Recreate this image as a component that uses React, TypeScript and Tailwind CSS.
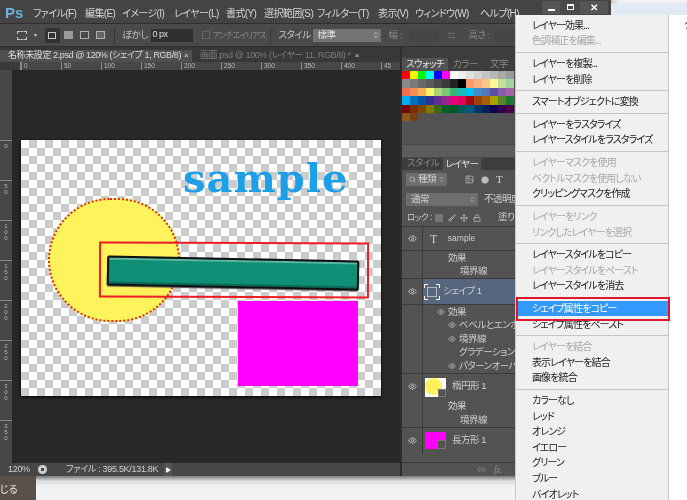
import { Eye, Link2, Lock, Move, Brush, ArrowLeftRight, Search, Image, Circle, ChevronsUpDown, Play } from "lucide-react";

const menuBar = [
  { label: "ファイル(F)", w: "w-[52px]" },
  { label: "編集(E)", w: "w-[37px]" },
  { label: "イメージ(I)", w: "w-[52px]" },
  { label: "レイヤー(L)", w: "w-[52px]" },
  { label: "書式(Y)", w: "w-[38px]" },
  { label: "選択範囲(S)", w: "w-[53px]" },
  { label: "フィルター(T)", w: "w-[61px]" },
  { label: "表示(V)", w: "w-[37px]" },
  { label: "ウィンドウ(W)", w: "w-[65px]" },
  { label: "ヘルプ(H)", w: "w-[62px]" },
];

const swatches = [
  ["#ff0000", "#ffff00", "#00ff00", "#00ffff", "#0000ff", "#ff00ff", "#ffffff", "#f0f0f0", "#e0e0e0", "#d2d2d2", "#c4c4c4", "#b6b6b6", "#a8a8a8", "#9a9a9a"],
  ["#8a8a8a", "#7a7a7a", "#6a6a6a", "#5a5a5a", "#4a4a4a", "#3a3a3a", "#222222", "#000000", "#f79a6c", "#fbb07e", "#fdc78d", "#fff799", "#c4df9b", "#a3d39c"],
  ["#f26c4f", "#f68e55", "#fbaf5c", "#fff467", "#acd372", "#7cc576", "#3bb878", "#1abbb4", "#00bff3", "#438cca", "#5574b9", "#5c50a2", "#8560a8", "#a763a8"],
  ["#00aeef", "#0072bc", "#0054a6", "#2e3192", "#662d91", "#92278f", "#e6007e", "#e6005f", "#9e0b0f", "#a0410d", "#a36209", "#aba000", "#598527", "#1a7b30"],
  ["#790000", "#7b2e00", "#7d4900", "#827b00", "#406618", "#005e20", "#005826", "#005952", "#005b7f", "#003663", "#002157", "#0d004c", "#32004b", "#4b0049"],
  ["#8c5a1f", "#7a3f10"],
];

const contextMenu: (string | { t: string; off?: boolean; on?: boolean } | null)[] = [
  "レイヤー効果...",
  { t: "色調補正を編集...", off: true },
  null,
  "レイヤーを複製...",
  "レイヤーを削除",
  null,
  "スマートオブジェクトに変換",
  null,
  "レイヤーをラスタライズ",
  "レイヤースタイルをラスタライズ",
  null,
  { t: "レイヤーマスクを使用", off: true },
  { t: "ベクトルマスクを使用しない", off: true },
  "クリッピングマスクを作成",
  null,
  { t: "レイヤーをリンク", off: true },
  { t: "リンクしたレイヤーを選択", off: true },
  null,
  "レイヤースタイルをコピー",
  { t: "レイヤースタイルをペースト", off: true },
  "レイヤースタイルを消去",
  null,
  { t: "シェイプ属性をコピー", on: true },
  "シェイプ属性をペースト",
  null,
  { t: "レイヤーを結合", off: true },
  "表示レイヤーを結合",
  "画像を統合",
  null,
  "カラーなし",
  "レッド",
  "オレンジ",
  "イエロー",
  "グリーン",
  "ブルー",
  "バイオレット",
];

function SubRow({ label, pl, eye }: { label: string; pl: string; eye?: boolean }) {
  return (
    <div className="flex h-[13.5px]">
      <div className="w-[21px] shrink-0 border-r border-[#3a3a3a]" />
      <div className={`flex w-[92px] shrink-0 items-center overflow-hidden whitespace-nowrap text-[9.5px] text-[#cfcfcf] ${pl}`}>
        {eye && <Eye size={8} className="mr-[3px] shrink-0 text-[#bdbdbd]" />}
        {label}
      </div>
    </div>
  );
}

export default function App() {
  return (
    <div className="relative h-[500px] w-[687px] overflow-hidden bg-[#f3f3f3] font-['Liberation_Sans','Noto_Sans_CJK_JP',sans-serif] blur-[0.35px] [font-feature-settings:'palt']">
      <div className="flex h-[476px]">
        {/* photoshop window */}
        <div className="flex w-[611px] shrink-0 flex-col bg-[#444444] shadow-[2px_2px_8px_rgba(0,0,0,0.6)]">
          <div className="flex h-[23px] shrink-0 items-center pl-[5px] pt-[3px]">
            <span className="w-[28px] shrink-0 text-[15px] font-bold text-[#6fb1e0]">Ps</span>
            <div className="flex shrink-0 text-[10px] tracking-[-0.6px] text-[#d4d4d4]">
              {menuBar.map((m) => (
                <span key={m.label} className={`shrink-0 whitespace-nowrap ${m.w}`}>{m.label}</span>
              ))}
            </div>
            <div className="flex -translate-y-[6px] text-white">
              <div className="flex h-[13px] w-[18px] items-end justify-center bg-[#555555] pb-[3px]"><div className="h-[2px] w-[7px] bg-white" /></div>
              <div className="flex h-[13px] w-[20px] items-center justify-center bg-[#4a4a4a]"><div className="h-[6px] w-[7px] border border-t-2 border-white" /></div>
              <div className="flex h-[13px] w-[28px] items-center justify-center bg-[#555555] text-[10px] font-bold">✕</div>
            </div>
          </div>

          <div className="flex h-[24px] shrink-0 items-center border-y border-[#2e2e2e] bg-[#4a4a4a] pl-[17px] text-[9.5px] tracking-[-0.5px] text-[#c8c8c8]">
            <div className="h-[9px] w-[10px] border border-dashed border-[#c8c8c8]" />
            <span className="ml-[7px] text-[6px]">▾</span>
            <div className="ml-[8px] flex h-[15px] w-[15px] items-center justify-center bg-[#333333]">
              <div className="h-[7px] w-[8px] border border-[#c8c8c8]" />
            </div>
            <div className="ml-[4px] h-[8px] w-[9px] bg-[#9a9a9a]" />
            <div className="ml-[7px] h-[8px] w-[9px] border border-[#b0b0b0]" />
            <div className="ml-[7px] h-[8px] w-[9px] border border-[#b0b0b0] bg-[#666666]" />
            <div className="ml-[9px] h-[15px] w-px bg-[#383838]" />
            <span className="ml-[8px] w-[28px] whitespace-nowrap">ぼかし :</span>
            <div className="flex h-[13px] w-[42px] items-center bg-[#303030] pl-[2px] text-[9px] text-[#dddddd]">0 px</div>
            <div className="ml-[9px] h-[8px] w-[8px] border border-[#666666]" />
            <span className="ml-[3px] w-[52px] whitespace-nowrap text-[8.5px] tracking-[-1px] text-[#808080]">アンチエイリアス</span>
            <div className="ml-[5px] h-[15px] w-px bg-[#383838]" />
            <span className="ml-[8px] w-[34px] whitespace-nowrap">スタイル :</span>
            <div className="flex h-[13px] w-[68px] items-center justify-between bg-[#737373] pl-[5px] pr-[1px] text-[#e0e0e0]">
              標準
              <ChevronsUpDown size={8} />
            </div>
            <span className="ml-[8px] w-[20px] text-[#888888]">幅 :</span>
            <div className="h-[13px] w-[30px] bg-[#454545]" />
            <ArrowLeftRight size={9} className="ml-[8px] text-[#777777]" />
            <span className="ml-[13px] w-[25px] whitespace-nowrap text-[#888888]">高さ :</span>
            <div className="h-[13px] w-[30px] bg-[#454545]" />
          </div>

          <div className="flex min-h-0 flex-1">
            {/* document column */}
            <div className="flex w-[400px] shrink-0 flex-col bg-[#282828]">
              <div className="flex h-[15px] shrink-0 items-stretch bg-[#383838] pt-[3px]">
                <div className="flex w-[192px] items-center bg-[#505050] pl-[8px] text-[9px] tracking-[-0.4px] text-[#dcdcdc]">
                  <span className="w-[176px] whitespace-nowrap">名称未設定 2.psd @ 120% (シェイプ 1, RGB/8)</span>
                  <span className="text-[8px]">×</span>
                </div>
                <div className="flex items-center pl-[8px] text-[9px] tracking-[-0.4px] text-[#7d7d7d]">
                  <span className="whitespace-nowrap">画面.psd @ 100% (レイヤー 11, RGB/8) *</span>
                  <span className="ml-[4px] text-[8px] text-[#cccccc]">×</span>
                </div>
              </div>
              <div className="flex h-[8px] shrink-0 bg-[#474747] text-[6.5px] leading-[8px] text-[#bbbbbb]">
                <div className="w-[21px] shrink-0 border-r border-[#8a8a8a] bg-[#3a3a3a]" />
                {["0", "50", "100", "150", "200", "250", "300", "350", "400", "45"].map((n) => (
                  <div key={n} className="w-[40px] shrink-0 border-l border-[#8a8a8a] pl-[2px]">{n}</div>
                ))}
              </div>
              <div className="flex min-h-0 flex-1">
                <div className="flex w-[12px] shrink-0 flex-col overflow-hidden bg-[#474747] pt-[70px] text-center text-[6px] leading-[6px] text-[#bbbbbb]">
                  {["0", "50", "100", "150", "200", "250", "300", "350"].map((n) => (
                    <div key={n} className="h-[40px] shrink-0 border-t border-[#8a8a8a] pt-[2px]">
                      {n.split("").map((d, i) => <div key={i}>{d}</div>)}
                    </div>
                  ))}
                </div>
                <div className="relative flex-1">
                  {/* canvas */}
                  <div className="ml-[9px] mt-[70px] h-[256px] w-[360px] bg-white bg-[conic-gradient(#cccccc_25%,#ffffff_0_50%,#cccccc_0_75%,#ffffff_0)] bg-[length:16px_16px] shadow-[0_1px_3px_#000]" />
                  <div className="absolute left-[36px] top-[128px] h-[124px] w-[132px] rounded-full border-2 border-dotted border-[#d8281f] bg-[#fff35c]" />
                  <div className="absolute left-[226px] top-[231px] h-[85px] w-[120px] bg-[#ff00ff]" />
                  <div className="absolute left-[171px] top-[84px] whitespace-nowrap font-['DejaVu_Serif',serif] text-[40px] font-bold leading-[48px] tracking-[1px] text-[#1c9fe6]">sample</div>
                  <div className="absolute left-[95px] top-[188px] h-[30px] w-[252px] rotate-[1.1deg] rounded-[2px] border-2 border-[#111111] bg-[#0f8f76] shadow-[inset_0_2px_0_#5db5a2,inset_0_-2px_0_#0a6a58,0_1px_1px_#555555]" />
                  <div className="absolute left-[87px] top-[172px] h-[56px] w-[270px] rotate-[0.2deg] border-2 border-[#ee1c25]" />
                </div>
              </div>
              <div className="flex h-[13px] shrink-0 items-center bg-[#474747] text-[9px] tracking-[-0.3px] text-[#d0d0d0]">
                <span className="ml-[8px] w-[30px]">120%</span>
                <div className="flex h-[9px] w-[9px] items-center justify-center rounded-full bg-[#d0d0d0]"><div className="h-[3px] w-[3px] bg-[#474747]" /></div>
                <span className="ml-[19px] w-[98px] whitespace-nowrap">ファイル : 395.5K/131.8K</span>
                <div className="flex h-full w-[8px] items-center justify-center bg-[#545454]">
                  <Play size={6} className="fill-white text-white" />
                </div>
              </div>
            </div>

            {/* panels */}
            <div className="flex flex-1 flex-col border-l-2 border-[#2e2e2e] bg-[#535353] text-[9.5px] tracking-[-0.5px] text-[#cfcfcf]">
              <div className="flex h-[24px] shrink-0 items-end bg-[#3d3d3d] pt-[10px]">
                <div className="flex h-[13px] w-[46px] items-center justify-center bg-[#535353] text-[#e6e6e6]">スウォッチ</div>
                <span className="ml-[5px] text-[#8a8a8a]">カラー</span>
                <span className="ml-[12px] text-[#8a8a8a]">文字</span>
              </div>
              <div className="flex h-[73px] shrink-0 flex-col">
                {swatches.map((row, i) => (
                  <div key={i} className="flex h-[8.4px]">
                    {row.map((c, j) => (
                      <div key={j} className="h-full w-[8px]" style={{ background: c }} />
                    ))}
                  </div>
                ))}
              </div>
              <div className="h-[14px] shrink-0 border-y border-[#484848] bg-[#5c5c5c]" />
              <div className="flex h-[12px] shrink-0 items-end bg-[#3d3d3d]">
                <span className="ml-[5px] w-[36px] whitespace-nowrap text-[#8a8a8a]">スタイル</span>
                <div className="flex h-[12px] w-[38px] items-center justify-center whitespace-nowrap bg-[#535353] text-[#e6e6e6]">レイヤー</div>
              </div>
              <div className="flex h-[19px] shrink-0 items-center pl-[4px]">
                <div className="flex h-[13px] w-[41px] shrink-0 items-center gap-[2px] whitespace-nowrap bg-[#6e6e6e] px-[3px]">
                  <Search size={7} className="shrink-0" />種類<ChevronsUpDown size={7} className="ml-auto shrink-0" />
                </div>
                <Image size={9} className="ml-[18px] text-[#bdbdbd]" />
                <Circle size={8} className="ml-[7px] fill-[#bdbdbd] text-[#bdbdbd]" />
                <span className="ml-[7px] font-['Liberation_Serif',serif] text-[11px]">T</span>
              </div>
              <div className="flex h-[20px] shrink-0 items-center pl-[4px]">
                <div className="flex h-[13px] w-[72px] shrink-0 items-center justify-between bg-[#6e6e6e] pl-[5px] pr-[2px]">
                  通常<ChevronsUpDown size={7} />
                </div>
                <span className="ml-[6px] w-[32px] overflow-hidden whitespace-nowrap">不透明度</span>
              </div>
              <div className="flex h-[18px] shrink-0 items-center border-b border-[#3a3a3a] pl-[5px]">
                <span className="w-[28px] whitespace-nowrap text-[8.5px]">ロック :</span>
                <div className="h-[8px] w-[8px] bg-[#777777]" />
                <Brush size={8} className="ml-[5px]" />
                <Move size={8} className="ml-[4px]" />
                <Lock size={8} className="ml-[5px]" />
                <span className="ml-[17px] whitespace-nowrap">塗り</span>
              </div>

              <div className="relative min-h-0 flex-1 overflow-hidden">
                <div className="flex h-[24px] border-b border-[#3a3a3a]">
                  <div className="flex w-[21px] shrink-0 items-center justify-center border-r border-[#3a3a3a]"><Eye size={9} /></div>
                  <span className="ml-[7px] self-center font-['Liberation_Serif',serif] text-[12px]">T</span>
                  <span className="ml-[11px] self-center text-[8.5px] tracking-normal">sample</span>
                </div>
                <SubRow label="効果" pl="pl-[25px]" />
                <SubRow label="境界線" pl="pl-[37px]" />
                <div className="flex h-[27px] border-y border-[#3a3a3a]">
                  <div className="flex w-[21px] shrink-0 items-center justify-center border-r border-[#3a3a3a]"><Eye size={9} /></div>
                  <div className="flex flex-1 items-center bg-[#56667c] pl-[1px]">
                    <svg width="16" height="16" viewBox="0 0 16 16" fill="none" className="shrink-0">
                      <path d="M0.5 4V0.5H4M12 0.5H15.5V4M15.5 12V15.5H12M4 15.5H0.5V12" stroke="#ffffff" />
                      <rect x="3.5" y="3.5" width="9" height="9" stroke="#b8b8b8" />
                    </svg>
                    <span className="ml-[3px] whitespace-nowrap">シェイプ 1</span>
                  </div>
                </div>
                <SubRow label="効果" pl="pl-[14px]" eye />
                <SubRow label="ベベルとエンボス" pl="pl-[25px]" eye />
                <SubRow label="境界線" pl="pl-[25px]" eye />
                <SubRow label="グラデーションオーバーレイ" pl="pl-[36px]" />
                <SubRow label="パターンオーバーレイ" pl="pl-[25px]" eye />
                <div className="flex h-[27px] border-t border-[#3a3a3a]">
                  <div className="flex w-[21px] shrink-0 items-center justify-center border-r border-[#3a3a3a]"><Eye size={9} /></div>
                  <div className="relative ml-[2px] mt-[4px] h-[19px] w-[21px] bg-white">
                    <div className="h-[17px] w-[17px] rounded-full bg-[#fff35c]" />
                    <div className="absolute bottom-0 right-0 h-[8px] w-[8px] border border-[#777777] bg-[#535353]" />
                  </div>
                  <span className="ml-[6px] self-center whitespace-nowrap">楕円形 1</span>
                </div>
                <SubRow label="効果" pl="pl-[25px]" />
                <SubRow label="境界線" pl="pl-[37px]" />
                <div className="flex h-[27px] border-t border-[#3a3a3a]">
                  <div className="flex w-[21px] shrink-0 items-center justify-center border-r border-[#3a3a3a]"><Eye size={9} /></div>
                  <div className="relative ml-[2px] mt-[4px] h-[17px] w-[21px] bg-[#ff00ff]">
                    <div className="absolute bottom-0 right-0 h-[9px] w-[9px] border border-[#777777] bg-[#535353]" />
                  </div>
                  <span className="ml-[6px] self-center whitespace-nowrap">長方形 1</span>
                </div>
                <div className="absolute bottom-0 left-0 flex h-[14px] w-full items-center border-t border-[#3a3a3a] bg-[#535353] pl-[75px] text-[#8a8a8a]">
                  <Link2 size={9} />
                  <span className="ml-[8px] font-['Liberation_Serif',serif] text-[10px] italic">fx.</span>
                </div>
              </div>
            </div>
          </div>
        </div>

        {/* desktop behind */}
        <div className="flex-1 pt-[3px]">
          <div className="h-[12px] bg-[#dfeaf5]" />
          <div className="h-full bg-white pl-[73px] pt-[2px] text-[10px] text-[#333333]">ク</div>
        </div>
      </div>

      <div className="flex h-[24px]">
        <div className="flex w-[36px] shrink-0 items-center bg-[#5a5048] pt-[2px] text-[10px] text-[#e8e8e8]">じる</div>
        <div className="w-[575px] shrink-0">
          <div className="h-[6px] bg-gradient-to-b from-[#7a7a7a] to-[#f0f0f0]" />
        </div>
        <div className="flex-1 bg-white" />
      </div>

      {/* context menu */}
      <div className="absolute left-[515px] top-[15px] h-[490px] w-[154px] border-l border-r border-[#c9c9c9] bg-[#f0f0f0] pt-[2.5px] text-[10px] tracking-[-0.9px] text-[#1c1c1c]">
        {contextMenu.map((item, i) => {
          if (item === null) {
            return <div key={i} className="flex h-[7px] items-center"><div className="h-px w-full bg-[#c4c4c4]" /></div>;
          }
          const it = typeof item === "string" ? { t: item } : item;
          return (
            <div
              key={i}
              className={`flex h-[15.62px] items-center whitespace-nowrap pl-[16px] ${it.on ? "bg-[#3399ff] text-white" : ""} ${it.off ? "text-[#a8a8a8]" : ""}`}
            >
              {it.t}
            </div>
          );
        })}
      </div>
      <div className="absolute left-[516px] top-[297px] h-[24px] w-[154px] border-2 border-[#e0182d]" />
    </div>
  );
}
